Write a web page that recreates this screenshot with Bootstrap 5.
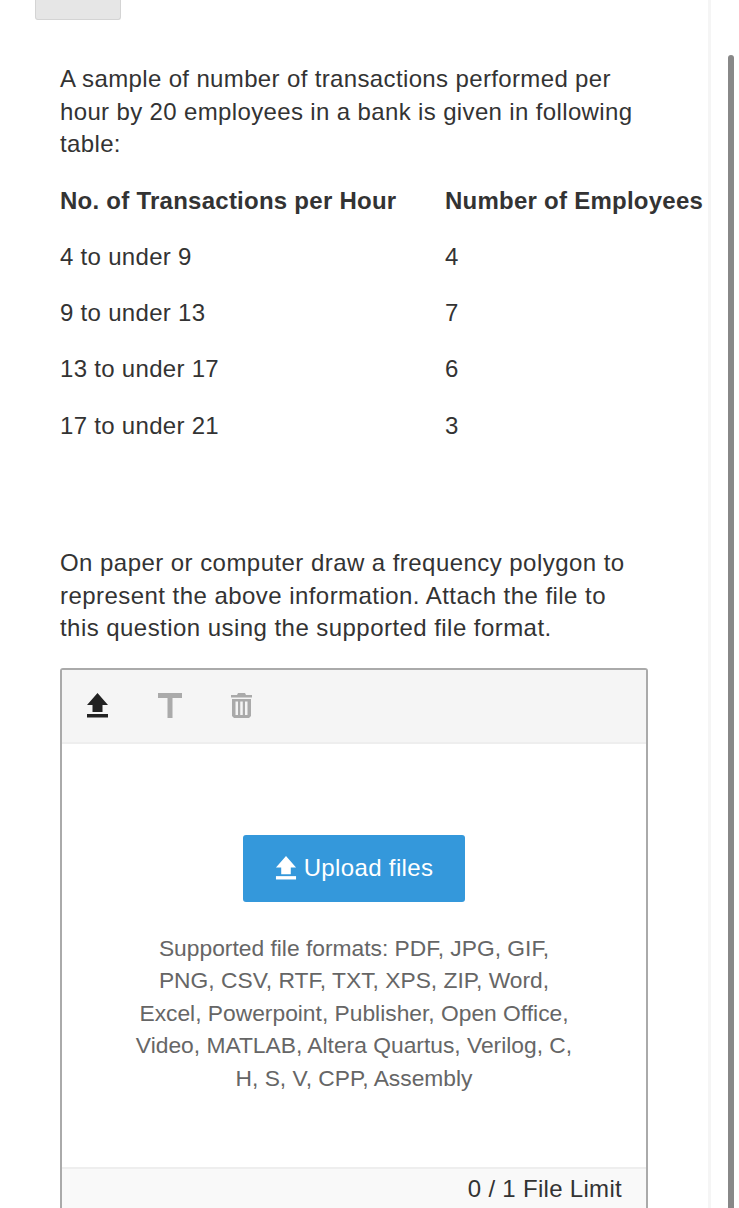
<!DOCTYPE html>
<html lang="en">
<head>
  <meta charset="UTF-8">
  <title>Question</title>
  <link href="https://cdn.jsdelivr.net/npm/bootstrap@5.3.3/dist/css/bootstrap.min.css" rel="stylesheet">
  <style>
    html, body { height: 100%; overflow: hidden; background: #fff; }
    body { font-family: "Liberation Sans", Arial, sans-serif; font-size: 24px; line-height: 32.5px; color: #333; }
    .page-col { width: 711px; height: 1208px; overflow: hidden; border-right: 3px solid #f5f5f5; padding: 0 0 0 60px; }
    .stub-btn { display: block; width: 86px; height: 20px; margin-left: -25px; background: #e6e6e6; border: 1px solid #d4d4d4; border-top: 0; border-radius: 0 0 3px 3px; padding: 0; }
    .q-text { margin: 43px 0 0; width: 590px; letter-spacing: .36px; }
    .q-text2 { margin: 0; width: 590px; letter-spacing: .45px; }
    .freq-table { width: 650px; margin: 12.5px 0 0; border-collapse: collapse; color: #333; letter-spacing: .3px; }
    .freq-table th, .freq-table td { padding: 0; height: 56.3px; font-size: 24px; white-space: nowrap; vertical-align: middle; }
    .freq-table th { height: 56px; letter-spacing: .25px; }
    .freq-table .col-a { width: 385px; }
    .gap-after { height: 93px; }
    .upload-box { width: 588px; height: 560px; margin-top: 23px; border: 2px solid #aaa; border-radius: 3px 3px 0 0; }
    .tool-bar { height: 74px; background: #f5f5f5; border-bottom: 2px solid #eee; padding-left: 24px; gap: 49px; }
    .drop-zone { height: 423px; padding-top: 91px; }
    .up-btn { width: 222px; height: 67px; background: #3498db; color: #fff; border: 0; border-radius: 3px; font-size: 24px; gap: 7px; letter-spacing: .35px; }
    .up-btn:hover { background: #3498db; color: #fff; }
    .formats { color: #666; width: 442px; font-size: 22.8px; margin: 30px auto 0; text-align: center; }
    .file-limit { background: #f9f9f9; border-top: 2px solid #eee; height: 60px; padding: 4px 24px 0 0; text-align: right; letter-spacing: .3px; }
    .scroll-thumb { position: absolute; left: 728px; top: 55px; width: 6px; height: 1153px; background: #888; border-radius: 3px 3px 0 0; }
  </style>
</head>
<body>
  <div class="page-col">
    <button type="button" class="stub-btn" aria-label="Back"></button>

    <p class="q-text">A sample of number of transactions performed per hour by 20 employees in a bank is given in following table:</p>

    <table class="freq-table">
      <thead>
        <tr>
          <th class="col-a">No. of Transactions per Hour</th>
          <th>Number of Employees</th>
        </tr>
      </thead>
      <tbody>
        <tr><td>4 to under 9</td><td>4</td></tr>
        <tr><td>9 to under 13</td><td>7</td></tr>
        <tr><td>13 to under 17</td><td>6</td></tr>
        <tr><td>17 to under 21</td><td>3</td></tr>
      </tbody>
    </table>
    <div class="gap-after"></div>

    <p class="q-text2">On paper or computer draw a frequency polygon to represent the above information. Attach the file to this question using the supported file format.</p>

    <div class="upload-box">
      <div class="tool-bar d-flex align-items-center">
        <svg width="23" height="25" viewBox="0 0 23 25" fill="#222"><path d="M11.500 0 22 12h-5.500v7h-10v-7H1z"/><rect x="1" y="21" width="21" height="3.500"/></svg>
        <svg width="24" height="25" viewBox="0 0 24 25" fill="#aaa"><path d="M0 0h24v5H14.500v20h-5V5H0z"/></svg>
        <svg width="21" height="25" viewBox="0 0 21 25" fill="#aaa"><path d="M7 0h7l1 2h6v2.500H0V2h6z"/><path d="M1 6h19v17l-2 2H3l-2-2zm3.500 2.500V22h2.500V8.500zm4.750 0V22h2.500V8.500zm4.750 0V22h2.500V8.500z" fill-rule="evenodd"/></svg>
      </div>
      <div class="drop-zone">
        <button type="button" class="btn up-btn d-flex align-items-center justify-content-center mx-auto">
          <svg width="22" height="24" viewBox="0 0 23 25" fill="#fff"><path d="M11.500 0 22 12h-5.500v7h-10v-7H1z"/><rect x="1" y="21" width="21" height="3.500"/></svg>
          <span>Upload files</span>
        </button>
        <div class="formats">Supported file formats: PDF, JPG, GIF, PNG, CSV, RTF, TXT, XPS, ZIP, Word, Excel, Powerpoint, Publisher, Open Office, Video, MATLAB, Altera Quartus, Verilog, C, H, S, V, CPP, Assembly</div>
      </div>
      <div class="file-limit">0 / 1 File Limit</div>
    </div>
  </div>
  <div class="scroll-thumb"></div>
</body>
</html>
